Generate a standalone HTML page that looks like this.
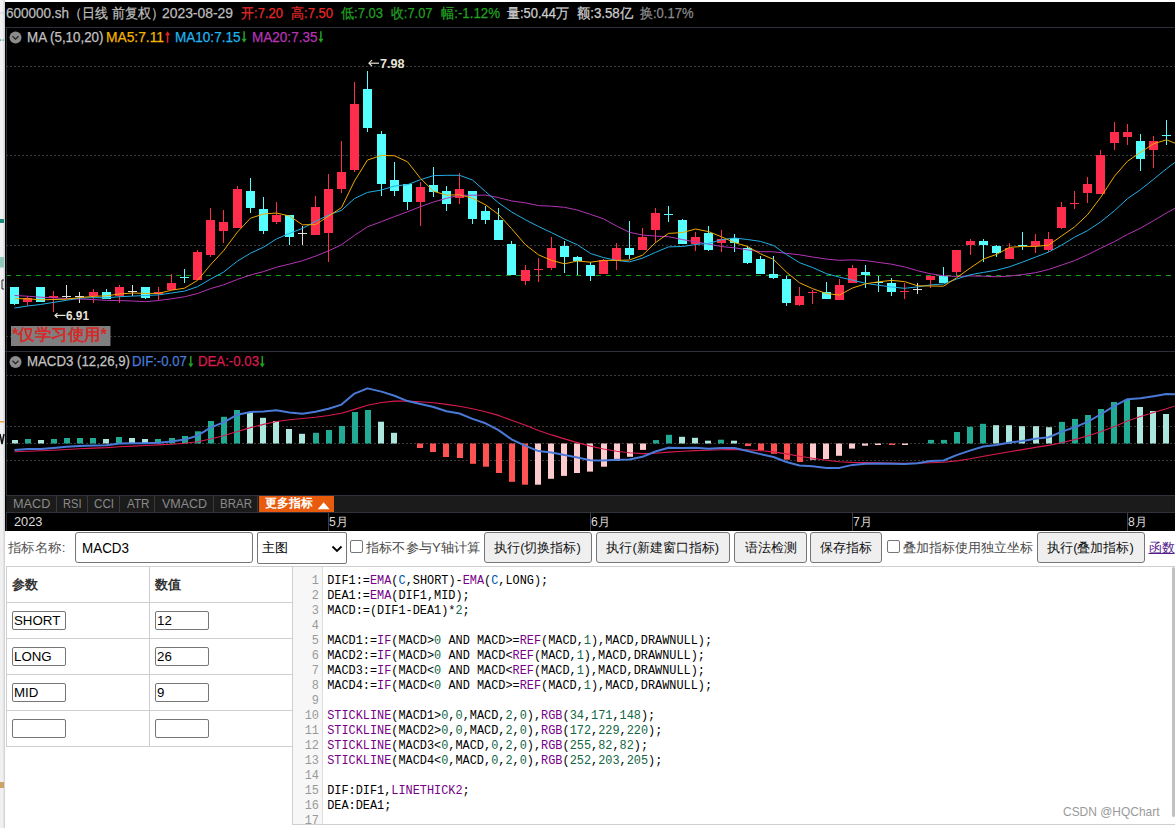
<!DOCTYPE html>
<html><head><meta charset="utf-8">
<style>
*{box-sizing:border-box;}
html,body{margin:0;padding:0;}
body{width:1175px;height:828px;overflow:hidden;position:relative;background:#fff;font-family:"Liberation Sans",sans-serif;}
.abs{position:absolute;white-space:nowrap;}
#left{left:0;top:0;width:5px;height:828px;background:#f0f0f0;}
#chart{left:5px;top:2px;width:1170px;height:529px;background:#000;}
svg.c{position:absolute;left:0;top:0;}
.hd{font-size:14px;color:#bcbcbc;line-height:16px;-webkit-text-stroke:0.25px currentColor;}
.ma{font-size:14px;line-height:16px;-webkit-text-stroke:0.25px currentColor;}
.tab{font-size:12px;color:#8a8a8a;top:497px;}
.dt{font-size:12px;color:#dcdcdc;top:514px;}
.lbl{font-size:12px;font-weight:bold;color:#e8e4d8;}
.form{font-size:13px;color:#333;}
.btn{position:absolute;top:532px;height:31px;background:#efefef;border:1px solid #767676;border-radius:3px;font-size:13px;color:#111;text-align:center;line-height:29px;}
.cb{position:absolute;top:540px;width:13px;height:13px;border:1px solid #767676;border-radius:2px;background:#fff;}
.inp{position:absolute;height:19px;border:1px solid #767676;border-radius:2px;background:#fff;font-size:13.3px;color:#000;line-height:17px;padding-left:1px;}
.code{font-family:"Liberation Mono",monospace;font-size:11.88px;color:#000;}
.k{color:#708;} .v{color:#05a;} .n{color:#164;}
</style></head><body>
<div id="left" class="abs"></div>
<div id="chart" class="abs"></div>
<svg class="c" width="1175" height="531" viewBox="0 0 1175 531"><line x1="6" y1="66.5" x2="1175" y2="66.5" stroke="#3c3c3c" stroke-width="1" stroke-dasharray="2,2"/>
<line x1="6" y1="155.5" x2="1175" y2="155.5" stroke="#3c3c3c" stroke-width="1" stroke-dasharray="2,2"/>
<line x1="6" y1="245.5" x2="1175" y2="245.5" stroke="#3c3c3c" stroke-width="1" stroke-dasharray="2,2"/>
<line x1="6" y1="336.5" x2="1175" y2="336.5" stroke="#3c3c3c" stroke-width="1" stroke-dasharray="2,2"/>
<line x1="6" y1="275.5" x2="1175" y2="275.5" stroke="#18a018" stroke-width="1" stroke-dasharray="5,5"/>
<rect x="14" y="287" width="1" height="18" fill="#55ffff"/>
<rect x="10" y="287" width="9" height="17" fill="#55ffff"/>
<rect x="27" y="296" width="1" height="10" fill="#ff2d4b"/>
<rect x="23" y="298" width="9" height="4" fill="#ff2d4b"/>
<rect x="40" y="287" width="1" height="15" fill="#55ffff"/>
<rect x="36" y="287" width="9" height="15" fill="#55ffff"/>
<rect x="53" y="291" width="1" height="21" fill="#ff2d4b"/>
<rect x="49" y="296" width="9" height="2" fill="#ff2d4b"/>
<rect x="66" y="285" width="1" height="14" fill="#e0e0e0"/>
<rect x="62" y="296" width="9" height="1" fill="#e0e0e0"/>
<rect x="79" y="292" width="1" height="11" fill="#e0e0e0"/>
<rect x="75" y="296" width="9" height="1" fill="#e0e0e0"/>
<rect x="93" y="289" width="1" height="14" fill="#ff2d4b"/>
<rect x="89" y="292" width="9" height="4" fill="#ff2d4b"/>
<rect x="106" y="289" width="1" height="10" fill="#55ffff"/>
<rect x="102" y="292" width="9" height="7" fill="#55ffff"/>
<rect x="119" y="285" width="1" height="18" fill="#ff2d4b"/>
<rect x="115" y="287" width="9" height="9" fill="#ff2d4b"/>
<rect x="132" y="285" width="1" height="11" fill="#e0e0e0"/>
<rect x="128" y="291" width="9" height="1" fill="#e0e0e0"/>
<rect x="145" y="287" width="1" height="12" fill="#55ffff"/>
<rect x="141" y="287" width="9" height="11" fill="#55ffff"/>
<rect x="158" y="287" width="1" height="13" fill="#ff2d4b"/>
<rect x="154" y="292" width="9" height="2" fill="#ff2d4b"/>
<rect x="171" y="274" width="1" height="16" fill="#ff2d4b"/>
<rect x="167" y="283" width="9" height="7" fill="#ff2d4b"/>
<rect x="184" y="269" width="1" height="14" fill="#55ffff"/>
<rect x="180" y="277" width="9" height="1" fill="#55ffff"/>
<rect x="197" y="250" width="1" height="30" fill="#ff2d4b"/>
<rect x="193" y="252" width="9" height="28" fill="#ff2d4b"/>
<rect x="210" y="208" width="1" height="49" fill="#ff2d4b"/>
<rect x="206" y="220" width="9" height="35" fill="#ff2d4b"/>
<rect x="223" y="210" width="1" height="33" fill="#ff2d4b"/>
<rect x="219" y="222" width="9" height="9" fill="#ff2d4b"/>
<rect x="237" y="186" width="1" height="42" fill="#ff2d4b"/>
<rect x="233" y="189" width="9" height="39" fill="#ff2d4b"/>
<rect x="250" y="178" width="1" height="35" fill="#55ffff"/>
<rect x="246" y="191" width="9" height="17" fill="#55ffff"/>
<rect x="263" y="197" width="1" height="37" fill="#55ffff"/>
<rect x="259" y="209" width="9" height="22" fill="#55ffff"/>
<rect x="276" y="202" width="1" height="22" fill="#ff2d4b"/>
<rect x="272" y="215" width="9" height="7" fill="#ff2d4b"/>
<rect x="289" y="215" width="1" height="30" fill="#55ffff"/>
<rect x="285" y="215" width="9" height="22" fill="#55ffff"/>
<rect x="302" y="226" width="1" height="19" fill="#e0e0e0"/>
<rect x="298" y="233" width="9" height="1" fill="#e0e0e0"/>
<rect x="315" y="196" width="1" height="39" fill="#ff2d4b"/>
<rect x="311" y="207" width="9" height="28" fill="#ff2d4b"/>
<rect x="328" y="174" width="1" height="88" fill="#ff2d4b"/>
<rect x="324" y="189" width="9" height="44" fill="#ff2d4b"/>
<rect x="341" y="141" width="1" height="52" fill="#ff2d4b"/>
<rect x="337" y="172" width="9" height="17" fill="#ff2d4b"/>
<rect x="354" y="82" width="1" height="90" fill="#ff2d4b"/>
<rect x="350" y="104" width="9" height="66" fill="#ff2d4b"/>
<rect x="367" y="71" width="1" height="61" fill="#55ffff"/>
<rect x="363" y="89" width="9" height="39" fill="#55ffff"/>
<rect x="381" y="131" width="1" height="65" fill="#55ffff"/>
<rect x="377" y="134" width="9" height="50" fill="#55ffff"/>
<rect x="394" y="162" width="1" height="34" fill="#55ffff"/>
<rect x="390" y="180" width="9" height="11" fill="#55ffff"/>
<rect x="407" y="184" width="1" height="26" fill="#55ffff"/>
<rect x="403" y="184" width="9" height="18" fill="#55ffff"/>
<rect x="420" y="182" width="1" height="44" fill="#ff2d4b"/>
<rect x="416" y="187" width="9" height="15" fill="#ff2d4b"/>
<rect x="433" y="167" width="1" height="30" fill="#55ffff"/>
<rect x="429" y="185" width="9" height="7" fill="#55ffff"/>
<rect x="446" y="186" width="1" height="25" fill="#55ffff"/>
<rect x="442" y="191" width="9" height="13" fill="#55ffff"/>
<rect x="459" y="173" width="1" height="31" fill="#ff2d4b"/>
<rect x="455" y="189" width="9" height="9" fill="#ff2d4b"/>
<rect x="472" y="191" width="1" height="33" fill="#55ffff"/>
<rect x="468" y="191" width="9" height="28" fill="#55ffff"/>
<rect x="485" y="206" width="1" height="18" fill="#55ffff"/>
<rect x="481" y="211" width="9" height="9" fill="#55ffff"/>
<rect x="498" y="208" width="1" height="32" fill="#55ffff"/>
<rect x="494" y="220" width="9" height="20" fill="#55ffff"/>
<rect x="511" y="241" width="1" height="34" fill="#55ffff"/>
<rect x="507" y="244" width="9" height="31" fill="#55ffff"/>
<rect x="525" y="265" width="1" height="20" fill="#ff2d4b"/>
<rect x="521" y="270" width="9" height="11" fill="#ff2d4b"/>
<rect x="538" y="258" width="1" height="24" fill="#ff2d4b"/>
<rect x="534" y="269" width="9" height="1" fill="#ff2d4b"/>
<rect x="551" y="237" width="1" height="33" fill="#ff2d4b"/>
<rect x="547" y="248" width="9" height="20" fill="#ff2d4b"/>
<rect x="564" y="241" width="1" height="32" fill="#55ffff"/>
<rect x="560" y="246" width="9" height="11" fill="#55ffff"/>
<rect x="577" y="256" width="1" height="19" fill="#55ffff"/>
<rect x="573" y="257" width="9" height="4" fill="#55ffff"/>
<rect x="590" y="262" width="1" height="19" fill="#55ffff"/>
<rect x="586" y="265" width="9" height="11" fill="#55ffff"/>
<rect x="603" y="259" width="1" height="15" fill="#ff2d4b"/>
<rect x="599" y="260" width="9" height="14" fill="#ff2d4b"/>
<rect x="616" y="243" width="1" height="27" fill="#ff2d4b"/>
<rect x="612" y="248" width="9" height="12" fill="#ff2d4b"/>
<rect x="629" y="221" width="1" height="38" fill="#55ffff"/>
<rect x="625" y="248" width="9" height="7" fill="#55ffff"/>
<rect x="642" y="228" width="1" height="22" fill="#ff2d4b"/>
<rect x="638" y="237" width="9" height="13" fill="#ff2d4b"/>
<rect x="655" y="208" width="1" height="35" fill="#ff2d4b"/>
<rect x="651" y="213" width="9" height="17" fill="#ff2d4b"/>
<rect x="668" y="206" width="1" height="16" fill="#55ffff"/>
<rect x="664" y="214" width="9" height="1" fill="#55ffff"/>
<rect x="682" y="219" width="1" height="25" fill="#55ffff"/>
<rect x="678" y="220" width="9" height="24" fill="#55ffff"/>
<rect x="695" y="232" width="1" height="19" fill="#ff2d4b"/>
<rect x="691" y="237" width="9" height="7" fill="#ff2d4b"/>
<rect x="708" y="226" width="1" height="25" fill="#55ffff"/>
<rect x="704" y="233" width="9" height="17" fill="#55ffff"/>
<rect x="721" y="230" width="1" height="22" fill="#ff2d4b"/>
<rect x="717" y="239" width="9" height="4" fill="#ff2d4b"/>
<rect x="734" y="234" width="1" height="18" fill="#55ffff"/>
<rect x="730" y="238" width="9" height="5" fill="#55ffff"/>
<rect x="747" y="246" width="1" height="18" fill="#55ffff"/>
<rect x="743" y="248" width="9" height="15" fill="#55ffff"/>
<rect x="760" y="256" width="1" height="18" fill="#55ffff"/>
<rect x="756" y="259" width="9" height="15" fill="#55ffff"/>
<rect x="773" y="256" width="1" height="23" fill="#55ffff"/>
<rect x="769" y="274" width="9" height="4" fill="#55ffff"/>
<rect x="786" y="276" width="1" height="30" fill="#55ffff"/>
<rect x="782" y="279" width="9" height="24" fill="#55ffff"/>
<rect x="799" y="287" width="1" height="19" fill="#ff2d4b"/>
<rect x="795" y="296" width="9" height="9" fill="#ff2d4b"/>
<rect x="812" y="290" width="1" height="14" fill="#ff2d4b"/>
<rect x="808" y="292" width="9" height="1" fill="#ff2d4b"/>
<rect x="826" y="282" width="1" height="17" fill="#55ffff"/>
<rect x="822" y="292" width="9" height="7" fill="#55ffff"/>
<rect x="839" y="279" width="1" height="21" fill="#ff2d4b"/>
<rect x="835" y="285" width="9" height="15" fill="#ff2d4b"/>
<rect x="852" y="265" width="1" height="18" fill="#ff2d4b"/>
<rect x="848" y="268" width="9" height="15" fill="#ff2d4b"/>
<rect x="865" y="265" width="1" height="23" fill="#55ffff"/>
<rect x="861" y="272" width="9" height="3" fill="#55ffff"/>
<rect x="878" y="276" width="1" height="16" fill="#55ffff"/>
<rect x="874" y="282" width="9" height="1" fill="#55ffff"/>
<rect x="891" y="278" width="1" height="18" fill="#55ffff"/>
<rect x="887" y="283" width="9" height="9" fill="#55ffff"/>
<rect x="904" y="283" width="1" height="16" fill="#ff2d4b"/>
<rect x="900" y="291" width="9" height="1" fill="#ff2d4b"/>
<rect x="917" y="283" width="1" height="11" fill="#e0e0e0"/>
<rect x="913" y="289" width="9" height="1" fill="#e0e0e0"/>
<rect x="930" y="276" width="1" height="12" fill="#ff2d4b"/>
<rect x="926" y="276" width="9" height="4" fill="#ff2d4b"/>
<rect x="943" y="267" width="1" height="16" fill="#55ffff"/>
<rect x="939" y="276" width="9" height="7" fill="#55ffff"/>
<rect x="956" y="250" width="1" height="25" fill="#ff2d4b"/>
<rect x="952" y="250" width="9" height="22" fill="#ff2d4b"/>
<rect x="970" y="239" width="1" height="16" fill="#ff2d4b"/>
<rect x="966" y="241" width="9" height="4" fill="#ff2d4b"/>
<rect x="983" y="239" width="1" height="23" fill="#55ffff"/>
<rect x="979" y="241" width="9" height="4" fill="#55ffff"/>
<rect x="996" y="245" width="1" height="12" fill="#55ffff"/>
<rect x="992" y="246" width="9" height="7" fill="#55ffff"/>
<rect x="1009" y="243" width="1" height="16" fill="#ff2d4b"/>
<rect x="1005" y="248" width="9" height="11" fill="#ff2d4b"/>
<rect x="1022" y="232" width="1" height="18" fill="#55ffff"/>
<rect x="1018" y="245" width="9" height="1" fill="#55ffff"/>
<rect x="1035" y="234" width="1" height="19" fill="#ff2d4b"/>
<rect x="1031" y="241" width="9" height="5" fill="#ff2d4b"/>
<rect x="1048" y="232" width="1" height="20" fill="#ff2d4b"/>
<rect x="1044" y="239" width="9" height="11" fill="#ff2d4b"/>
<rect x="1061" y="202" width="1" height="27" fill="#ff2d4b"/>
<rect x="1057" y="207" width="9" height="21" fill="#ff2d4b"/>
<rect x="1074" y="191" width="1" height="18" fill="#ff2d4b"/>
<rect x="1070" y="203" width="9" height="1" fill="#ff2d4b"/>
<rect x="1087" y="177" width="1" height="26" fill="#ff2d4b"/>
<rect x="1083" y="184" width="9" height="9" fill="#ff2d4b"/>
<rect x="1100" y="150" width="1" height="44" fill="#ff2d4b"/>
<rect x="1096" y="155" width="9" height="39" fill="#ff2d4b"/>
<rect x="1114" y="122" width="1" height="28" fill="#ff2d4b"/>
<rect x="1110" y="132" width="9" height="11" fill="#ff2d4b"/>
<rect x="1127" y="124" width="1" height="21" fill="#ff2d4b"/>
<rect x="1123" y="132" width="9" height="5" fill="#ff2d4b"/>
<rect x="1140" y="134" width="1" height="37" fill="#55ffff"/>
<rect x="1136" y="141" width="9" height="18" fill="#55ffff"/>
<rect x="1153" y="136" width="1" height="32" fill="#ff2d4b"/>
<rect x="1149" y="141" width="9" height="9" fill="#ff2d4b"/>
<rect x="1166" y="120" width="1" height="25" fill="#55ffff"/>
<rect x="1162" y="135" width="9" height="1" fill="#55ffff"/>
<polyline points="14.5,295.5 27.5,296.2 40.5,297.2 53.5,297.8 66.5,298.5 79.5,299.1 93.5,299.6 106.5,300.4 119.5,300.6 132.5,301.0 145.5,301.7 158.5,300.5 171.5,298.8 184.5,296.8 197.5,293.5 210.5,288.6 223.5,284.9 237.5,279.4 250.5,275.0 263.5,271.6 276.5,267.2 289.5,264.1 302.5,260.7 315.5,256.2 328.5,250.9 341.5,244.7 354.5,235.3 367.5,226.8 381.5,221.6 394.5,216.6 407.5,211.8 420.5,206.6 433.5,202.0 446.5,198.3 459.5,195.2 472.5,195.2 485.5,195.1 498.5,197.6 511.5,200.9 525.5,202.9 538.5,205.6 551.5,206.2 564.5,207.3 577.5,210.1 590.5,214.4 603.5,218.8 616.5,226.0 629.5,232.3 642.5,235.0 655.5,236.1 668.5,236.7 682.5,239.6 695.5,241.8 708.5,244.1 721.5,246.6 734.5,247.8 747.5,249.9 760.5,251.7 773.5,251.8 786.5,253.4 799.5,254.8 812.5,257.0 826.5,259.1 839.5,260.3 852.5,259.9 865.5,260.6 878.5,262.4 891.5,264.2 904.5,266.9 917.5,270.7 930.5,273.8 943.5,275.8 956.5,276.4 970.5,275.9 983.5,276.2 996.5,276.8 1009.5,276.0 1022.5,274.6 1035.5,272.7 1048.5,269.5 1061.5,265.1 1074.5,260.6 1087.5,254.8 1100.5,248.3 1114.5,241.6 1127.5,234.4 1140.5,228.2 1153.5,220.7 1166.5,212.9 1179.5,206.0" fill="none" stroke="#b535b5" stroke-width="1.0" stroke-linejoin="round"/>
<polyline points="14.5,308.0 27.5,306.0 40.5,304.5 53.5,302.4 66.5,300.3 79.5,298.2 93.5,297.6 106.5,297.8 119.5,296.7 132.5,296.1 145.5,295.5 158.5,294.9 171.5,293.0 184.5,291.1 197.5,286.7 210.5,279.1 223.5,272.1 237.5,261.1 250.5,253.2 263.5,247.2 276.5,238.9 289.5,233.4 302.5,228.4 315.5,221.4 328.5,215.1 341.5,210.3 354.5,198.5 367.5,192.4 381.5,190.0 394.5,186.0 407.5,184.7 420.5,179.7 433.5,175.6 446.5,175.3 459.5,175.3 472.5,180.0 485.5,191.6 498.5,202.8 511.5,211.9 525.5,219.8 538.5,226.5 551.5,232.6 564.5,239.1 577.5,244.8 590.5,253.5 603.5,257.6 616.5,260.4 629.5,261.9 642.5,258.1 655.5,252.4 668.5,246.9 682.5,246.5 695.5,244.5 708.5,243.4 721.5,239.7 734.5,238.0 747.5,239.5 760.5,241.4 773.5,245.5 786.5,254.5 799.5,262.7 812.5,267.5 826.5,273.7 839.5,277.2 852.5,280.1 865.5,283.3 878.5,285.2 891.5,287.0 904.5,288.3 917.5,286.9 930.5,284.9 943.5,284.0 956.5,279.1 970.5,274.7 983.5,272.4 996.5,270.2 1009.5,266.8 1022.5,262.1 1035.5,257.1 1048.5,252.1 1061.5,245.2 1074.5,237.2 1087.5,230.6 1100.5,222.0 1114.5,210.7 1127.5,198.6 1140.5,189.7 1153.5,179.3 1166.5,168.7 1179.5,159.0" fill="none" stroke="#22aee6" stroke-width="1.0" stroke-linejoin="round"/>
<polyline points="14.5,298.7 27.5,298.8 40.5,299.8 53.5,299.5 66.5,299.2 79.5,297.6 93.5,296.4 106.5,295.8 119.5,294.0 132.5,293.0 145.5,293.4 158.5,293.4 171.5,290.2 184.5,288.2 197.5,280.4 210.5,264.8 223.5,250.8 237.5,232.0 250.5,218.2 263.5,214.0 276.5,213.0 289.5,216.0 302.5,224.8 315.5,224.6 328.5,216.2 341.5,207.6 354.5,181.0 367.5,160.0 381.5,155.4 394.5,155.8 407.5,161.8 420.5,178.4 433.5,191.2 446.5,195.2 459.5,194.8 472.5,198.2 485.5,204.8 498.5,214.4 511.5,228.6 525.5,244.8 538.5,254.8 551.5,260.4 564.5,263.8 577.5,261.0 590.5,262.2 603.5,260.4 616.5,260.4 629.5,260.0 642.5,255.2 655.5,242.6 668.5,233.4 682.5,232.6 695.5,229.0 708.5,231.6 721.5,236.8 734.5,242.6 747.5,246.4 760.5,253.8 773.5,259.4 786.5,272.2 799.5,282.8 812.5,288.6 826.5,293.6 839.5,295.0 852.5,288.0 865.5,283.8 878.5,281.8 891.5,280.4 904.5,281.6 917.5,285.8 930.5,286.0 943.5,286.2 956.5,277.8 970.5,267.8 983.5,259.0 996.5,254.4 1009.5,247.4 1022.5,246.4 1035.5,246.4 1048.5,245.2 1061.5,236.0 1074.5,227.0 1087.5,214.8 1100.5,197.6 1114.5,176.2 1127.5,161.2 1140.5,152.4 1153.5,143.8 1166.5,139.8 1179.5,145.0" fill="none" stroke="#f0aa00" stroke-width="1.0" stroke-linejoin="round"/>
<line x1="6" y1="375.5" x2="1175" y2="375.5" stroke="#3c3c3c" stroke-width="1" stroke-dasharray="2,2"/>
<line x1="6" y1="426.5" x2="1175" y2="426.5" stroke="#3c3c3c" stroke-width="1" stroke-dasharray="2,2"/>
<line x1="6" y1="443.5" x2="1175" y2="443.5" stroke="#3c3c3c" stroke-width="1" stroke-dasharray="2,2"/>
<line x1="6" y1="460.5" x2="1175" y2="460.5" stroke="#3c3c3c" stroke-width="1" stroke-dasharray="2,2"/>
<rect x="12" y="440.0" width="6" height="3.5" fill="rgb(172,229,220)"/>
<rect x="25" y="439.0" width="6" height="4.5" fill="rgb(34,171,148)"/>
<rect x="38" y="440.0" width="6" height="3.5" fill="rgb(172,229,220)"/>
<rect x="51" y="439.0" width="6" height="4.5" fill="rgb(34,171,148)"/>
<rect x="64" y="438.0" width="6" height="5.5" fill="rgb(34,171,148)"/>
<rect x="77" y="438.0" width="6" height="5.5" fill="rgb(34,171,148)"/>
<rect x="90" y="438.0" width="6" height="5.5" fill="rgb(34,171,148)"/>
<rect x="103" y="439.0" width="6" height="4.5" fill="rgb(172,229,220)"/>
<rect x="116" y="437.0" width="6" height="6.5" fill="rgb(34,171,148)"/>
<rect x="129" y="438.0" width="6" height="5.5" fill="rgb(172,229,220)"/>
<rect x="142" y="439.0" width="6" height="4.5" fill="rgb(172,229,220)"/>
<rect x="155" y="439.0" width="6" height="4.5" fill="rgb(34,171,148)"/>
<rect x="169" y="438.0" width="6" height="5.5" fill="rgb(34,171,148)"/>
<rect x="182" y="436.0" width="6" height="7.5" fill="rgb(34,171,148)"/>
<rect x="195" y="431.3" width="6" height="12.2" fill="rgb(34,171,148)"/>
<rect x="208" y="421.0" width="6" height="22.5" fill="rgb(34,171,148)"/>
<rect x="221" y="416.8" width="6" height="26.7" fill="rgb(34,171,148)"/>
<rect x="234" y="410.0" width="6" height="33.5" fill="rgb(34,171,148)"/>
<rect x="247" y="412.3" width="6" height="31.2" fill="rgb(172,229,220)"/>
<rect x="260" y="417.8" width="6" height="25.7" fill="rgb(172,229,220)"/>
<rect x="273" y="421.0" width="6" height="22.5" fill="rgb(172,229,220)"/>
<rect x="286" y="429.0" width="6" height="14.5" fill="rgb(172,229,220)"/>
<rect x="299" y="433.8" width="6" height="9.7" fill="rgb(172,229,220)"/>
<rect x="313" y="432.8" width="6" height="10.7" fill="rgb(34,171,148)"/>
<rect x="326" y="430.0" width="6" height="13.5" fill="rgb(34,171,148)"/>
<rect x="339" y="426.0" width="6" height="17.5" fill="rgb(34,171,148)"/>
<rect x="352" y="412.0" width="6" height="31.5" fill="rgb(34,171,148)"/>
<rect x="365" y="410.0" width="6" height="33.5" fill="rgb(34,171,148)"/>
<rect x="378" y="421.7" width="6" height="21.8" fill="rgb(172,229,220)"/>
<rect x="391" y="432.8" width="6" height="10.7" fill="rgb(172,229,220)"/>
<rect x="417" y="443.5" width="6" height="4.5" fill="rgb(255,82,82)"/>
<rect x="430" y="443.5" width="6" height="8.5" fill="rgb(255,82,82)"/>
<rect x="443" y="443.5" width="6" height="13.5" fill="rgb(255,82,82)"/>
<rect x="457" y="443.5" width="6" height="14.5" fill="rgb(255,82,82)"/>
<rect x="470" y="443.5" width="6" height="20.3" fill="rgb(255,82,82)"/>
<rect x="483" y="443.5" width="6" height="23.2" fill="rgb(255,82,82)"/>
<rect x="496" y="443.5" width="6" height="29.5" fill="rgb(255,82,82)"/>
<rect x="509" y="443.5" width="6" height="38.3" fill="rgb(255,82,82)"/>
<rect x="522" y="443.5" width="6" height="41.2" fill="rgb(255,82,82)"/>
<rect x="535" y="443.5" width="6" height="41.2" fill="rgb(252,203,205)"/>
<rect x="548" y="443.5" width="6" height="35.3" fill="rgb(252,203,205)"/>
<rect x="561" y="443.5" width="6" height="32.4" fill="rgb(252,203,205)"/>
<rect x="574" y="443.5" width="6" height="29.5" fill="rgb(252,203,205)"/>
<rect x="587" y="443.5" width="6" height="28.1" fill="rgb(252,203,205)"/>
<rect x="601" y="443.5" width="6" height="23.2" fill="rgb(252,203,205)"/>
<rect x="614" y="443.5" width="6" height="17.3" fill="rgb(252,203,205)"/>
<rect x="627" y="443.5" width="6" height="13.3" fill="rgb(252,203,205)"/>
<rect x="640" y="443.5" width="6" height="6.4" fill="rgb(252,203,205)"/>
<rect x="653" y="440.1" width="6" height="3.4" fill="rgb(34,171,148)"/>
<rect x="666" y="434.8" width="6" height="8.7" fill="rgb(34,171,148)"/>
<rect x="679" y="436.8" width="6" height="6.7" fill="rgb(172,229,220)"/>
<rect x="692" y="437.8" width="6" height="5.7" fill="rgb(172,229,220)"/>
<rect x="705" y="440.7" width="6" height="2.8" fill="rgb(172,229,220)"/>
<rect x="718" y="439.7" width="6" height="3.8" fill="rgb(34,171,148)"/>
<rect x="731" y="440.7" width="6" height="2.8" fill="rgb(172,229,220)"/>
<rect x="745" y="443.5" width="6" height="2.5" fill="rgb(255,82,82)"/>
<rect x="758" y="443.5" width="6" height="7.0" fill="rgb(255,82,82)"/>
<rect x="771" y="443.5" width="6" height="10.3" fill="rgb(255,82,82)"/>
<rect x="784" y="443.5" width="6" height="16.2" fill="rgb(255,82,82)"/>
<rect x="797" y="443.5" width="6" height="18.5" fill="rgb(255,82,82)"/>
<rect x="810" y="443.5" width="6" height="16.2" fill="rgb(252,203,205)"/>
<rect x="823" y="443.5" width="6" height="15.6" fill="rgb(252,203,205)"/>
<rect x="836" y="443.5" width="6" height="12.3" fill="rgb(252,203,205)"/>
<rect x="849" y="443.5" width="6" height="5.1" fill="rgb(252,203,205)"/>
<rect x="862" y="443.5" width="6" height="2.2" fill="rgb(252,203,205)"/>
<rect x="875" y="443.5" width="6" height="1.5" fill="rgb(252,203,205)"/>
<rect x="889" y="443.5" width="6" height="1.5" fill="rgb(255,82,82)"/>
<rect x="902" y="443.5" width="6" height="1.5" fill="rgb(252,203,205)"/>
<rect x="928" y="439.9" width="6" height="3.6" fill="rgb(34,171,148)"/>
<rect x="941" y="439.9" width="6" height="3.6" fill="rgb(34,171,148)"/>
<rect x="954" y="432.0" width="6" height="11.5" fill="rgb(34,171,148)"/>
<rect x="967" y="426.8" width="6" height="16.7" fill="rgb(34,171,148)"/>
<rect x="980" y="423.8" width="6" height="19.7" fill="rgb(34,171,148)"/>
<rect x="993" y="425.2" width="6" height="18.3" fill="rgb(172,229,220)"/>
<rect x="1006" y="425.2" width="6" height="18.3" fill="rgb(172,229,220)"/>
<rect x="1019" y="426.2" width="6" height="17.3" fill="rgb(172,229,220)"/>
<rect x="1033" y="426.2" width="6" height="17.3" fill="rgb(172,229,220)"/>
<rect x="1046" y="427.2" width="6" height="16.3" fill="rgb(172,229,220)"/>
<rect x="1059" y="421.9" width="6" height="21.6" fill="rgb(34,171,148)"/>
<rect x="1072" y="418.9" width="6" height="24.6" fill="rgb(34,171,148)"/>
<rect x="1085" y="415.0" width="6" height="28.5" fill="rgb(34,171,148)"/>
<rect x="1098" y="409.0" width="6" height="34.5" fill="rgb(34,171,148)"/>
<rect x="1111" y="402.0" width="6" height="41.5" fill="rgb(34,171,148)"/>
<rect x="1124" y="399.8" width="6" height="43.7" fill="rgb(34,171,148)"/>
<rect x="1137" y="407.0" width="6" height="36.5" fill="rgb(172,229,220)"/>
<rect x="1150" y="411.0" width="6" height="32.5" fill="rgb(172,229,220)"/>
<rect x="1163" y="414.0" width="6" height="29.5" fill="rgb(172,229,220)"/>
<polyline points="14.5,451.8 27.5,451.2 40.5,450.8 53.5,450.2 66.5,449.5 79.5,448.8 93.5,448.1 106.5,447.6 119.5,446.8 132.5,446.1 145.5,445.5 158.5,444.9 171.5,444.3 184.5,443.3 197.5,441.8 210.5,439.0 223.5,435.7 237.5,431.5 250.5,427.6 263.5,424.4 276.5,421.5 289.5,419.7 302.5,418.5 315.5,417.2 328.5,415.5 341.5,413.3 354.5,409.4 367.5,405.2 381.5,402.5 394.5,401.1 407.5,401.1 420.5,401.7 433.5,402.7 446.5,404.4 459.5,406.2 472.5,408.8 485.5,411.7 498.5,415.4 511.5,420.2 525.5,425.3 538.5,430.5 551.5,434.9 564.5,438.9 577.5,442.6 590.5,446.1 603.5,449.0 616.5,451.2 629.5,452.8 642.5,453.6 655.5,453.2 668.5,452.1 682.5,451.3 695.5,450.6 708.5,450.2 721.5,449.8 734.5,449.4 747.5,449.7 760.5,450.6 773.5,451.9 786.5,453.9 799.5,456.2 812.5,458.2 826.5,460.2 839.5,461.7 852.5,462.4 865.5,462.6 878.5,462.8 891.5,463.0 904.5,463.2 917.5,463.2 930.5,462.8 943.5,462.3 956.5,460.9 970.5,458.8 983.5,456.3 996.5,454.0 1009.5,451.7 1022.5,449.6 1035.5,447.4 1048.5,445.4 1061.5,442.7 1074.5,439.6 1087.5,436.0 1100.5,431.7 1114.5,426.5 1127.5,421.1 1140.5,416.5 1153.5,412.5 1166.5,408.8 1179.5,404.5" fill="none" stroke="#d81b4f" stroke-width="1.1" stroke-linejoin="round"/>
<polyline points="14.5,450.0 27.5,448.9 40.5,449.0 53.5,447.9 66.5,446.8 79.5,446.1 93.5,445.4 106.5,445.3 119.5,443.5 132.5,443.3 145.5,443.3 158.5,442.7 171.5,441.5 184.5,439.6 197.5,435.7 210.5,427.7 223.5,422.3 237.5,414.7 250.5,412.0 263.5,411.5 276.5,410.3 289.5,412.5 302.5,413.7 315.5,411.8 328.5,408.7 341.5,404.6 354.5,393.6 367.5,388.4 381.5,391.6 394.5,395.8 407.5,401.1 420.5,403.9 433.5,407.0 446.5,411.2 459.5,413.5 472.5,418.9 485.5,423.3 498.5,430.1 511.5,439.3 525.5,445.9 538.5,451.1 551.5,452.5 564.5,455.1 577.5,457.4 590.5,460.2 603.5,460.6 616.5,459.8 629.5,459.5 642.5,456.8 655.5,451.5 668.5,447.8 682.5,447.9 695.5,447.7 708.5,448.8 721.5,447.9 734.5,448.0 747.5,451.0 760.5,454.1 773.5,457.0 786.5,462.0 799.5,465.5 812.5,466.3 826.5,468.0 839.5,467.9 852.5,464.9 865.5,463.7 878.5,463.6 891.5,463.8 904.5,464.0 917.5,463.2 930.5,461.0 943.5,460.5 956.5,455.1 970.5,450.4 983.5,446.5 996.5,444.9 1009.5,442.6 1022.5,440.9 1035.5,438.8 1048.5,437.2 1061.5,431.9 1074.5,427.3 1087.5,421.8 1100.5,414.5 1114.5,405.8 1127.5,399.2 1140.5,398.3 1153.5,396.2 1166.5,394.0 1179.5,394.4" fill="none" stroke="#4a7ad8" stroke-width="2.0" stroke-linejoin="round"/>
<line x1="5" y1="27.5" x2="1175" y2="27.5" stroke="#2d323a" stroke-width="1"/>
<line x1="5" y1="351.5" x2="1175" y2="351.5" stroke="#2d323a" stroke-width="1"/>
<line x1="6.5" y1="27" x2="6.5" y2="531" stroke="#2d323a" stroke-width="1"/>
<rect x="6" y="495" width="1169" height="18" fill="#1b1b1b"/>
<line x1="6" y1="495.5" x2="1175" y2="495.5" stroke="#30343a" stroke-width="1"/>
<line x1="6" y1="512.5" x2="1175" y2="512.5" stroke="#30343a" stroke-width="1"/>
<line x1="56.5" y1="496" x2="56.5" y2="512" stroke="#3a3a3a" stroke-width="1"/>
<line x1="87.5" y1="496" x2="87.5" y2="512" stroke="#3a3a3a" stroke-width="1"/>
<line x1="119.5" y1="496" x2="119.5" y2="512" stroke="#3a3a3a" stroke-width="1"/>
<line x1="154.5" y1="496" x2="154.5" y2="512" stroke="#3a3a3a" stroke-width="1"/>
<line x1="213.5" y1="496" x2="213.5" y2="512" stroke="#3a3a3a" stroke-width="1"/>
<line x1="257.5" y1="496" x2="257.5" y2="512" stroke="#3a3a3a" stroke-width="1"/>
<rect x="259" y="496" width="75" height="16" fill="#e85a0c"/>
<line x1="328.5" y1="513" x2="328.5" y2="531" stroke="#3a3f48" stroke-width="1"/>
<line x1="590.5" y1="513" x2="590.5" y2="531" stroke="#3a3f48" stroke-width="1"/>
<line x1="852.5" y1="513" x2="852.5" y2="531" stroke="#3a3f48" stroke-width="1"/>
<line x1="1127.5" y1="513" x2="1127.5" y2="531" stroke="#3a3f48" stroke-width="1"/>
<rect x="11" y="326" width="99.5" height="20" fill="#7f7f7f"/>
<circle cx="15.5" cy="37.5" r="6" fill="#8c8c8c"/>
<polyline points="12.5,36.3 15.5,39.1 18.5,36.3" fill="none" stroke="#222" stroke-width="1.2"/>
<circle cx="15.5" cy="362" r="6" fill="#8c8c8c"/>
<polyline points="12.5,360.8 15.5,363.6 18.5,360.8" fill="none" stroke="#222" stroke-width="1.2"/></svg>
<div class="abs hd" style="left:6px;top:5.2px;"><span id="f1" style="display:inline-block;transform:scaleX(0.9632);transform-origin:0 0">600000.sh</span></div>
<div class="abs hd" style="left:68.5px;top:5.2px;"><span id="f2" style="display:inline-block;transform:scaleX(0.9275);transform-origin:0 0">（日线 前复权）</span></div>
<div class="abs hd" style="left:162.3px;top:5.2px;"><span id="f3" style="display:inline-block;transform:scaleX(0.9913);transform-origin:0 0">2023-08-29</span></div>
<div class="abs hd" style="left:241.2px;top:5.2px;color:#e52a2a"><span id="f4" style="display:inline-block;transform:scaleX(0.9304);transform-origin:0 0">开:7.20</span></div>
<div class="abs hd" style="left:291.2px;top:5.2px;color:#e52a2a"><span id="f5" style="display:inline-block;transform:scaleX(0.9304);transform-origin:0 0">高:7.50</span></div>
<div class="abs hd" style="left:340.5px;top:5.2px;color:#22a022"><span id="f6" style="display:inline-block;transform:scaleX(0.9304);transform-origin:0 0">低:7.03</span></div>
<div class="abs hd" style="left:391px;top:5.2px;color:#22a022"><span id="f7" style="display:inline-block;transform:scaleX(0.9193);transform-origin:0 0">收:7.07</span></div>
<div class="abs hd" style="left:440.5px;top:5.2px;color:#22a022"><span id="f8" style="display:inline-block;transform:scaleX(0.9478);transform-origin:0 0">幅:-1.12%</span></div>
<div class="abs hd" style="left:507.2px;top:5.2px;color:#cfcfcf"><span id="f9" style="display:inline-block;transform:scaleX(0.9262);transform-origin:0 0">量:50.44万</span></div>
<div class="abs hd" style="left:577px;top:5.2px;color:#cfcfcf"><span id="f10" style="display:inline-block;transform:scaleX(0.9469);transform-origin:0 0">额:3.58亿</span></div>
<div class="abs hd" style="left:640px;top:5.2px;color:#8a8a8a"><span id="f11" style="display:inline-block;transform:scaleX(0.9289);transform-origin:0 0">换:0.17%</span></div>
<div class="abs ma" style="left:27.2px;top:29.1px;color:#c2c2c2"><span id="f12" style="display:inline-block;transform:scaleX(0.9544);transform-origin:0 0">MA (5,10,20)</span></div>
<div class="abs ma" style="left:106px;top:29.1px;color:#f3b400"><span id="f13" style="display:inline-block;transform:scaleX(0.9849);transform-origin:0 0">MA5:7.11</span></div>
<div class="abs ma" style="left:175.2px;top:29.1px;color:#1fb5ef"><span id="f14" style="display:inline-block;transform:scaleX(0.9672);transform-origin:0 0">MA10:7.15</span></div>
<div class="abs ma" style="left:252px;top:29.1px;color:#b535b5"><span id="f15" style="display:inline-block;transform:scaleX(0.9672);transform-origin:0 0">MA20:7.35</span></div>
<div class="abs ma" style="left:26.5px;top:353.1px;color:#c2c2c2"><span id="f16" style="display:inline-block;transform:scaleX(0.9455);transform-origin:0 0">MACD3 (12,26,9)</span></div>
<div class="abs ma" style="left:132px;top:353.1px;color:#4a7ad8"><span id="f17" style="display:inline-block;transform:scaleX(0.9390);transform-origin:0 0">DIF:-0.07</span></div>
<div class="abs ma" style="left:197.6px;top:353.1px;color:#d81b4f"><span id="f18" style="display:inline-block;transform:scaleX(0.9444);transform-origin:0 0">DEA:-0.03</span></div>
<div class="abs lbl" style="left:379.5px;top:57px;"><span id="f19" style="display:inline-block;transform:scaleX(1.0488);transform-origin:0 0">7.98</span></div>
<div class="abs lbl" style="left:65.8px;top:308.5px;"><span id="f20" style="display:inline-block;transform:scaleX(0.9846);transform-origin:0 0">6.91</span></div>
<div class="abs " style="left:12px;top:324.5px;font-size:16px;font-weight:bold;color:#d42a2a;line-height:20px;"><span id="f21" style="display:inline-block;transform:scaleX(1.0275);transform-origin:0 0">*仅学习使用*</span></div>
<div class="abs tab" style="left:13px;top:496.5px;"><span id="f22" style="display:inline-block;transform:scaleX(1.0553);transform-origin:0 0">MACD</span></div>
<div class="abs tab" style="left:62.5px;top:496.5px;"><span id="f23" style="display:inline-block;transform:scaleX(0.9243);transform-origin:0 0">RSI</span></div>
<div class="abs tab" style="left:94px;top:496.5px;"><span id="f24" style="display:inline-block;transform:scaleX(0.9675);transform-origin:0 0">CCI</span></div>
<div class="abs tab" style="left:126.5px;top:496.5px;"><span id="f25" style="display:inline-block;transform:scaleX(0.9736);transform-origin:0 0">ATR</span></div>
<div class="abs tab" style="left:161.5px;top:496.5px;"><span id="f26" style="display:inline-block;transform:scaleX(1.0382);transform-origin:0 0">VMACD</span></div>
<div class="abs tab" style="left:220px;top:496.5px;"><span id="f27" style="display:inline-block;transform:scaleX(0.9597);transform-origin:0 0">BRAR</span></div>
<div class="abs tab" style="left:264.5px;top:495px;color:#fff;font-weight:bold"><span id="f28" style="display:inline-block;transform:scaleX(0.9896);transform-origin:0 0">更多指标</span></div>
<div class="abs dt" style="left:14px;top:515px;"><span id="f29" style="display:inline-block;transform:scaleX(1.0673);transform-origin:0 0">2023</span></div>
<div class="abs dt" style="left:329px;top:513.6px;"><span id="f30" style="display:inline-block;transform:scaleX(1.0167);transform-origin:0 0">5月</span></div>
<div class="abs dt" style="left:590.5px;top:513.6px;"><span id="f31" style="display:inline-block;transform:scaleX(1.0167);transform-origin:0 0">6月</span></div>
<div class="abs dt" style="left:852.5px;top:513.6px;"><span id="f32" style="display:inline-block;transform:scaleX(1.0167);transform-origin:0 0">7月</span></div>
<div class="abs dt" style="left:1127.5px;top:513.6px;"><span id="f33" style="display:inline-block;transform:scaleX(1.0167);transform-origin:0 0">8月</span></div>
<div class="abs form" style="left:7.5px;top:540px;line-height:16px;color:#555"><span id="f34" style="display:inline-block;transform:scaleX(1.0337);transform-origin:0 0">指标名称:</span></div>
<div class="abs" style="left:75px;top:532px;width:178px;height:31px;border:1px solid #767676;border-radius:3px;background:#fff;"></div>
<div class="abs form" style="left:82px;top:540.2px;color:#000;line-height:16px;font-size:14px"><span id="f35" style="display:inline-block;transform:scaleX(0.9589);transform-origin:0 0">MACD3</span></div>
<div class="abs" style="left:257px;top:532px;width:90px;height:32px;border:1px solid #767676;border-radius:2px;background:#fff;"></div>
<div class="abs form" style="left:262px;top:540px;color:#000;line-height:16px">主图</div>
<svg class="c" style="left:331px;top:543.5px" width="12" height="10"><polyline points="1.5,2.5 6,7 10.5,2.5" fill="none" stroke="#000" stroke-width="1.8"/></svg>
<div class="cb" style="left:350px"></div>
<div class="abs form" style="left:366px;top:540px;color:#4a4a4a;line-height:16px"><span id="f36" style="display:inline-block;transform:scaleX(1.0162);transform-origin:0 0">指标不参与Y轴计算</span></div>
<div class="btn" style="left:483.5px;width:108.0px">执行(切换指标)</div>
<div class="btn" style="left:595.5px;width:134.5px">执行(新建窗口指标)</div>
<div class="btn" style="left:734.3px;width:72.7px">语法检测</div>
<div class="btn" style="left:810.3px;width:72.2px">保存指标</div>
<div class="btn" style="left:1036.5px;width:108.0px">执行(叠加指标)</div>
<div class="cb" style="left:887px"></div>
<div class="abs form" style="left:903px;top:540px;color:#4a4a4a;line-height:16px"><span id="f37" style="display:inline-block;transform:scaleX(1.0000);transform-origin:0 0">叠加指标使用独立坐标</span></div>
<div class="abs form" style="left:1148.5px;top:540px;color:#551a8b;text-decoration:underline;line-height:16px">函数</div>
<div class="abs" style="left:6px;top:566px;width:287px;height:181px;border:1px solid #cfcfcf;"></div>
<div class="abs" style="left:6px;top:602px;width:287px;height:1px;background:#cfcfcf;"></div>
<div class="abs" style="left:6px;top:638px;width:287px;height:1px;background:#cfcfcf;"></div>
<div class="abs" style="left:6px;top:674px;width:287px;height:1px;background:#cfcfcf;"></div>
<div class="abs" style="left:6px;top:710px;width:287px;height:1px;background:#cfcfcf;"></div>
<div class="abs" style="left:149px;top:566px;width:1px;height:181px;background:#cfcfcf;"></div>
<div class="abs form" style="left:12px;top:577px;font-weight:bold;color:#333;line-height:16px">参数</div>
<div class="abs form" style="left:155px;top:577px;font-weight:bold;color:#333;line-height:16px">数值</div>
<div class="inp" style="left:12px;top:611px;width:54px;">SHORT</div>
<div class="inp" style="left:155px;top:611px;width:54px;">12</div>
<div class="inp" style="left:12px;top:647px;width:54px;">LONG</div>
<div class="inp" style="left:155px;top:647px;width:54px;">26</div>
<div class="inp" style="left:12px;top:683px;width:54px;">MID</div>
<div class="inp" style="left:155px;top:683px;width:54px;">9</div>
<div class="inp" style="left:12px;top:719px;width:54px;"></div>
<div class="inp" style="left:155px;top:719px;width:54px;"></div>
<div class="abs" style="left:292px;top:566px;width:883px;height:259px;border:1px solid #cfcfcf;border-right:none;background:#fff;"></div>
<div class="abs" style="left:293px;top:567px;width:30px;height:257px;background:#f7f7f7;border-right:1px solid #ddd;"></div>
<div class="abs code" style="left:293px;top:573.6px;line-height:15px"><div style="width:26px;text-align:right;color:#999">1</div></div>
<div class="abs code" style="left:327.2px;top:573.6px;line-height:15px">DIF1:=<span class="k">EMA</span>(<span class="v">C</span>,SHORT)-<span class="k">EMA</span>(<span class="v">C</span>,LONG);</div>
<div class="abs code" style="left:293px;top:588.6px;line-height:15px"><div style="width:26px;text-align:right;color:#999">2</div></div>
<div class="abs code" style="left:327.2px;top:588.6px;line-height:15px">DEA1:=<span class="k">EMA</span>(DIF1,MID);</div>
<div class="abs code" style="left:293px;top:603.6px;line-height:15px"><div style="width:26px;text-align:right;color:#999">3</div></div>
<div class="abs code" style="left:327.2px;top:603.6px;line-height:15px">MACD:=(DIF1-DEA1)*<span class="n">2</span>;</div>
<div class="abs code" style="left:293px;top:618.6px;line-height:15px"><div style="width:26px;text-align:right;color:#999">4</div></div>
<div class="abs code" style="left:327.2px;top:618.6px;line-height:15px"></div>
<div class="abs code" style="left:293px;top:633.6px;line-height:15px"><div style="width:26px;text-align:right;color:#999">5</div></div>
<div class="abs code" style="left:327.2px;top:633.6px;line-height:15px">MACD1:=<span class="k">IF</span>(MACD><span class="n">0</span> AND MACD>=<span class="k">REF</span>(MACD,<span class="n">1</span>),MACD,DRAWNULL);</div>
<div class="abs code" style="left:293px;top:648.6px;line-height:15px"><div style="width:26px;text-align:right;color:#999">6</div></div>
<div class="abs code" style="left:327.2px;top:648.6px;line-height:15px">MACD2:=<span class="k">IF</span>(MACD><span class="n">0</span> AND MACD&lt;<span class="k">REF</span>(MACD,<span class="n">1</span>),MACD,DRAWNULL);</div>
<div class="abs code" style="left:293px;top:663.6px;line-height:15px"><div style="width:26px;text-align:right;color:#999">7</div></div>
<div class="abs code" style="left:327.2px;top:663.6px;line-height:15px">MACD3:=<span class="k">IF</span>(MACD&lt;<span class="n">0</span> AND MACD&lt;<span class="k">REF</span>(MACD,<span class="n">1</span>),MACD,DRAWNULL);</div>
<div class="abs code" style="left:293px;top:678.6px;line-height:15px"><div style="width:26px;text-align:right;color:#999">8</div></div>
<div class="abs code" style="left:327.2px;top:678.6px;line-height:15px">MACD4:=<span class="k">IF</span>(MACD&lt;<span class="n">0</span> AND MACD>=<span class="k">REF</span>(MACD,<span class="n">1</span>),MACD,DRAWNULL);</div>
<div class="abs code" style="left:293px;top:693.6px;line-height:15px"><div style="width:26px;text-align:right;color:#999">9</div></div>
<div class="abs code" style="left:327.2px;top:693.6px;line-height:15px"></div>
<div class="abs code" style="left:293px;top:708.6px;line-height:15px"><div style="width:26px;text-align:right;color:#999">10</div></div>
<div class="abs code" style="left:327.2px;top:708.6px;line-height:15px"><span class="k">STICKLINE</span>(MACD1><span class="n">0</span>,<span class="n">0</span>,MACD,<span class="n">2</span>,<span class="n">0</span>),<span class="k">RGB</span>(<span class="n">34</span>,<span class="n">171</span>,<span class="n">148</span>);</div>
<div class="abs code" style="left:293px;top:723.6px;line-height:15px"><div style="width:26px;text-align:right;color:#999">11</div></div>
<div class="abs code" style="left:327.2px;top:723.6px;line-height:15px"><span class="k">STICKLINE</span>(MACD2><span class="n">0</span>,<span class="n">0</span>,MACD,<span class="n">2</span>,<span class="n">0</span>),<span class="k">RGB</span>(<span class="n">172</span>,<span class="n">229</span>,<span class="n">220</span>);</div>
<div class="abs code" style="left:293px;top:738.6px;line-height:15px"><div style="width:26px;text-align:right;color:#999">12</div></div>
<div class="abs code" style="left:327.2px;top:738.6px;line-height:15px"><span class="k">STICKLINE</span>(MACD3&lt;<span class="n">0</span>,MACD,<span class="n">0</span>,<span class="n">2</span>,<span class="n">0</span>),<span class="k">RGB</span>(<span class="n">255</span>,<span class="n">82</span>,<span class="n">82</span>);</div>
<div class="abs code" style="left:293px;top:753.6px;line-height:15px"><div style="width:26px;text-align:right;color:#999">13</div></div>
<div class="abs code" style="left:327.2px;top:753.6px;line-height:15px"><span class="k">STICKLINE</span>(MACD4&lt;<span class="n">0</span>,MACD,<span class="n">0</span>,<span class="n">2</span>,<span class="n">0</span>),<span class="k">RGB</span>(<span class="n">252</span>,<span class="n">203</span>,<span class="n">205</span>);</div>
<div class="abs code" style="left:293px;top:768.6px;line-height:15px"><div style="width:26px;text-align:right;color:#999">14</div></div>
<div class="abs code" style="left:327.2px;top:768.6px;line-height:15px"></div>
<div class="abs code" style="left:293px;top:783.6px;line-height:15px"><div style="width:26px;text-align:right;color:#999">15</div></div>
<div class="abs code" style="left:327.2px;top:783.6px;line-height:15px">DIF:DIF1,<span class="k">LINETHICK2</span>;</div>
<div class="abs code" style="left:293px;top:798.6px;line-height:15px"><div style="width:26px;text-align:right;color:#999">16</div></div>
<div class="abs code" style="left:327.2px;top:798.6px;line-height:15px">DEA:DEA1;</div>
<div class="abs" style="left:293px;top:813.6px;width:29px;height:10.4px;overflow:hidden;"><div class="code" style="text-align:right;color:#999;width:26px;line-height:15px;">17</div></div>
<div class="abs code" style="left:327.2px;top:813.6px;line-height:15px"></div>
<div class="abs" style="left:1172px;top:567px;width:3px;height:250px;background:#c1c1c1;border-radius:2px;"></div>
<div class="abs " style="left:1062.5px;top:804px;font-size:13px;color:#9a9a9a;line-height:16px"><span id="f38" style="display:inline-block;transform:scaleX(0.9196);transform-origin:0 0">CSDN @HQChart</span></div>
<svg class="c" width="5" height="828"><rect x="3.5" y="0" width="1.5" height="828" fill="#d4d5d9"/><rect x="0" y="12.5" width="4" height="1" fill="#cdd0d6"/><rect x="0" y="39.5" width="1.2" height="1.2" fill="#1a9a8a"/><rect x="2.5" y="39.5" width="1.2" height="1.2" fill="#1a9a8a"/><rect x="0" y="219" width="4" height="4" fill="#1a8a7a"/><rect x="0" y="257" width="4" height="10.5" fill="#8fc8b8"/><path d="M4,280 H2 V289 H4" fill="none" stroke="#222" stroke-width="1"/><rect x="0" y="421" width="4" height="1.5" fill="#e8a040"/><path d="M0,434 L2,444 L4,434" fill="none" stroke="#111" stroke-width="1.5"/><rect x="0" y="782" width="4" height="6" fill="#c08030" opacity="0.7"/></svg><svg class="c" width="1175" height="531"><rect x="166.85" y="33.70" width="1.5" height="9.10" fill="#e02222"/><polygon points="165.00,35.20 167.60,31.20 170.20,35.20" fill="#e02222"/><rect x="243.35" y="31.20" width="1.5" height="9.10" fill="#22a022"/><polygon points="241.50,38.80 244.10,42.80 246.70,38.80" fill="#22a022"/><rect x="320.15" y="31.20" width="1.5" height="9.10" fill="#22a022"/><polygon points="318.30,38.80 320.90,42.80 323.50,38.80" fill="#22a022"/><rect x="190.05" y="356.00" width="1.5" height="9.00" fill="#22a022"/><polygon points="188.20,363.50 190.80,367.50 193.40,363.50" fill="#22a022"/><rect x="261.55" y="356.00" width="1.5" height="9.00" fill="#22a022"/><polygon points="259.70,363.50 262.30,367.50 264.90,363.50" fill="#22a022"/><polyline points="372,60.2 369,63.2 372,66.2" fill="none" stroke="#e8e4d8" stroke-width="1.2"/><line x1="369" y1="63.2" x2="379" y2="63.2" stroke="#e8e4d8" stroke-width="1.2"/><polyline points="57.5,313.1 55,315.4 57.5,317.7" fill="none" stroke="#e8e4d8" stroke-width="1.2"/><line x1="55" y1="315.4" x2="65.5" y2="315.4" stroke="#e8e4d8" stroke-width="1.2"/><polygon points="317.7,509.3 323.65,502.3 329.6,509.3" fill="#fff"/></svg>
</body></html>
